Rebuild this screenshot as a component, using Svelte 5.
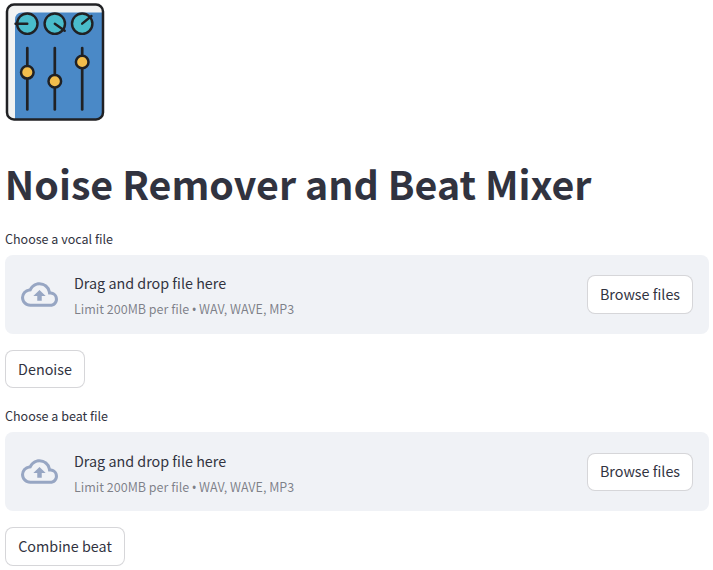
<script>
  const sections = [
    { label: 'Choose a vocal file', action: 'Denoise', width: 80 },
    { label: 'Choose a beat file', action: 'Combine beat', width: 120 }
  ];
  const sliders = [
    { x: 27.3, y: 72.3 },
    { x: 54.8, y: 81.2 },
    { x: 82.2, y: 62 }
  ];
</script>

<main>
  <svg class="logo" width="110" height="124" viewBox="0 0 110 124" aria-label="Audio mixer">
    <rect x="7" y="4.5" width="96" height="115" rx="7" fill="#f1f2f2" />
    <path d="M15 119.5V20q0-7.5 7-7.5H103V112q0 7.5-7 7.5Z" fill="#4a89c7" />
    <rect x="7" y="4.5" width="96" height="115" rx="7" fill="none" stroke="#202124" stroke-width="2.5" />
    <g fill="#49bccb" stroke="#202124" stroke-width="2.4" stroke-linecap="round">
      <circle cx="27.3" cy="23.7" r="10.2" />
      <circle cx="54.8" cy="23.7" r="10.2" />
      <circle cx="82.2" cy="23.7" r="10.2" />
      <path d="M15.5 23.7H27.3M54.8 23.7L64.7 30.8M82.2 23.7L91.5 16" />
    </g>
    {#each sliders as s}
      <path d="M{s.x} 48V109.5" stroke="#202124" stroke-width="2.7" stroke-linecap="round" />
      <circle cx={s.x} cy={s.y} r="6.3" fill="#f2bd4c" stroke="#202124" stroke-width="2.5" />
    {/each}
  </svg>

  <h1>Noise Remover and Beat Mixer</h1>

  {#each sections as s}
    <section>
      <div class="label">{s.label}</div>
      <div class="zone">
        <svg class="cloud" viewBox="0 0 24 24" width="37" height="37">
          <path fill="#97a6c3" d="M19.35 10.04A7.49 7.49 0 0 0 12 4C9.11 4 6.6 5.64 5.35 8.04A5.994 5.994 0 0 0 0 14c0 3.31 2.69 6 6 6h13c2.76 0 5-2.24 5-5 0-2.64-2.05-4.78-4.65-4.96zM19 18H6c-2.21 0-4-1.79-4-4 0-2.05 1.53-3.76 3.56-3.97l1.07-.11.5-.95A5.469 5.469 0 0 1 12 6c2.62 0 4.88 1.86 5.39 4.43l.3 1.5 1.53.11A2.98 2.98 0 0 1 22 15c0 1.65-1.35 3-3 3zM8 13h2.55v3h2.9v-3H16l-4-4z" />
        </svg>
        <div class="text">
          <span class="main">Drag and drop file here</span>
          <small>Limit 200MB per file <span class="dot">•</span> WAV, WAVE, MP3</small>
        </div>
        <button class="browse">Browse files</button>
      </div>
      <button style:width="{s.width}px">{s.action}</button>
    </section>
  {/each}
</main>

<style>
  :global(body) {
    background: #fff;
    overflow: hidden;
  }
  main {
    box-sizing: border-box;
    width: 713px;
    height: 570px;
    overflow: hidden;
    font-family: "Noto Sans CJK SC", "Noto Sans", sans-serif;
    color: #31333f;
  }
  .logo {
    display: block;
  }
  h1 {
    margin: 32px 0 0 4.8px;
    height: 73.8px;
    font-size: 39.36px;
    line-height: 53px;
    font-weight: 700;
    white-space: nowrap;
  }
  section {
    height: 177.2px;
    padding: 0 4px 0 5px;
  }
  .label {
    height: 25px;
    font-size: 12.53px;
    line-height: 17.4px;
  }
  .zone {
    display: flex;
    align-items: center;
    box-sizing: border-box;
    height: 79px;
    margin-bottom: 16px;
    padding: 0 16px;
    border-radius: 8px;
    background: #f0f2f6;
  }
  .text {
    display: flex;
    flex-direction: column;
    flex: 1;
    margin-left: 16px;
    padding-top: 3.2px;
    white-space: nowrap;
  }
  .main {
    font-size: 14.33px;
    line-height: 26px;
  }
  small {
    font-size: 12.53px;
    line-height: 25px;
    color: rgba(49, 51, 63, 0.6);
  }
  .dot {
    display: inline-block;
    width: 4.2px;
    font-family: "Open Sans", sans-serif;
    font-size: 14px;
    line-height: 1;
    text-indent: -0.5px;
    vertical-align: -1px;
  }
  button {
    display: block;
    box-sizing: border-box;
    height: 38.6px;
    padding: 0;
    border: 1px solid rgba(49, 51, 63, 0.2);
    border-radius: 8px;
    background: #fff;
    color: #31333f;
    font-family: inherit;
    font-size: 14.33px;
    line-height: 26px;
    white-space: nowrap;
  }
  .browse {
    width: 106px;
    margin-top: 0.7px;
    padding-bottom: 0.8px;
  }
</style>
